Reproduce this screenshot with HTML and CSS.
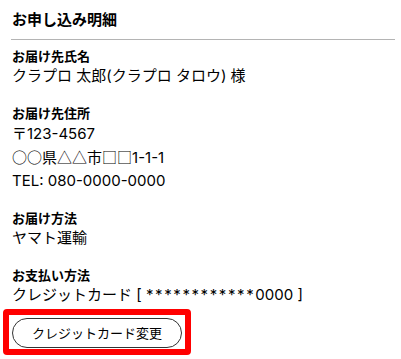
FILE: index.html
```html
<!DOCTYPE html>
<html lang="ja">
<head>
<meta charset="utf-8">
<link rel="stylesheet" href="styles.css">
</head>
<body>
<div class="panel">
  <h2 class="title">お申し込み明細</h2>
  <div class="section first">
    <div class="label">お届け先氏名</div>
    <div class="value">クラプロ 太郎(クラプロ タロウ) 様</div>
  </div>
  <div class="section">
    <div class="label">お届け先住所</div>
    <div class="value"><span class="cjk">〒</span>123-4567</div>
    <div class="value"><span class="cjk">○○</span>県<span class="cjk">△△</span>市<span class="cjk">□□</span>1-1-1</div>
    <div class="value">TEL: 080-0000-0000</div>
  </div>
  <div class="section">
    <div class="label">お届け方法</div>
    <div class="value">ヤマト運輸</div>
  </div>
  <div class="section">
    <div class="label">お支払い方法</div>
    <div class="value">クレジットカード [ <span class="mask">************</span>0000 ]</div>
    <div class="highlight">
      <button class="btn" type="button">クレジットカード変更</button>
    </div>
  </div>
</div>
</body>
</html>
```

FILE: styles.css
```css
html, body {
  margin: 0;
  padding: 0;
  background: #fff;
}
body {
  font-family: "Inter", "Noto Sans CJK JP", sans-serif;
  color: #000;
}
.panel {
  padding: 0 6px 0 11px;
}
.title {
  margin: 10px 0 0 0;
  padding: 0 0 9px 1px;
  font-size: 15px;
  line-height: 20px;
  font-weight: bold;
  border-bottom: 1px solid #b4b4b4;
}
.section {
  margin-top: 18px;
  padding-left: 1px;
}
.section.first {
  margin-top: 8px;
}
.label {
  font-size: 13px;
  line-height: 16px;
  font-weight: bold;
}
.value {
  font-size: 15px;
  line-height: 23px;
}
.cjk {
  font-family: "Noto Sans CJK JP", sans-serif;
}
.mask {
  letter-spacing: 1.6px;
}
.highlight {
  display: inline-block;
  margin: 3px 0 0 -9px;
  padding: 3px 3px 1px 3px;
  border: 6px solid #ff0000;
  border-radius: 4px;
}
.btn {
  display: block;
  box-sizing: border-box;
  width: 170px;
  height: 30px;
  padding: 0;
  border: 1px solid #333;
  border-radius: 15px;
  background: #fff;
  color: #000;
  font-family: "Inter", "Noto Sans CJK JP", sans-serif;
  font-size: 13px;
  line-height: 28px;
  text-align: center;
}
```
